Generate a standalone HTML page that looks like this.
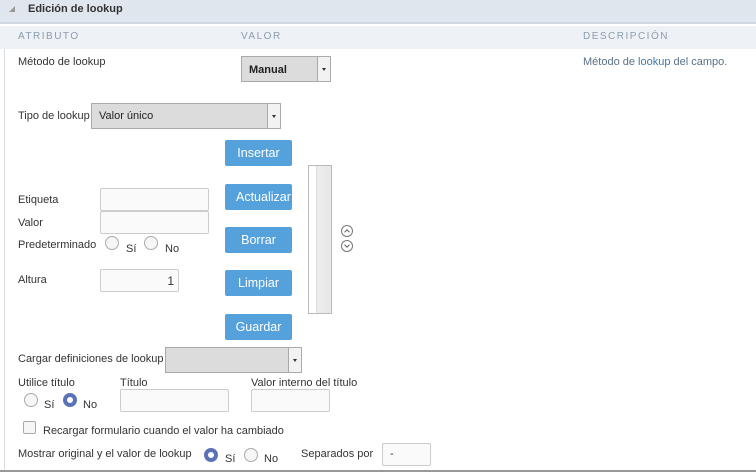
<!DOCTYPE html>
<html><head><meta charset="utf-8"><style>
*{box-sizing:border-box;margin:0;padding:0}
body{width:756px;height:473px;background:#fff;font-family:"Liberation Sans",sans-serif;font-size:11px;color:#333;position:relative;overflow:hidden}
.a{position:absolute;white-space:nowrap}
.hdr{left:0;top:0;width:756px;height:24px;background:#e0e6ee;border-bottom:2px solid #d0d8e2}
.col{left:0;top:26px;width:756px;height:23px;background:#eef2f6}
.inp{position:absolute;border:1px solid #ccc;background:#fafafa;border-radius:2px}
.sel{position:absolute;border:1px solid #aaa;background:#dcdcdc;font-size:11px;color:#222;padding-left:7px}
.sel b{position:absolute;right:0;top:0;bottom:0;width:13px;border-left:1px solid #aaa;background:#f2f2f2}
.sel b:after{content:"";position:absolute;left:4px;top:50%;margin-top:-1px;border:2.5px solid transparent;border-top:3px solid #333}
.btn{position:absolute;left:225px;width:67px;height:26px;background:#55a1dc;color:#fff;font-family:"Liberation Sans",sans-serif;font-size:12.5px;border-radius:2px;text-align:center;line-height:26px;overflow:hidden}
.r{position:absolute;width:14px;height:14px;border:1px solid #aaa;border-radius:50%;background:#f6f6f6}
.r.on{border:4px solid #5a72b8;background:#fff}
</style></head><body>
<div class="a hdr"></div>
<div class="a" style="left:9px;top:6px;width:0;height:0;border-left:6px solid transparent;border-bottom:6px solid #999"></div>
<div class="a" style="left:28px;top:3px;font-size:11px;font-weight:bold;color:#333">Edición de lookup</div>
<div class="a col"></div>
<div class="a" style="left:18px;top:31px;font-size:10px;color:#8a9cad;letter-spacing:1.5px">ATRIBUTO</div>
<div class="a" style="left:241px;top:31px;font-size:10px;color:#8a9cad;letter-spacing:1.5px">VALOR</div>
<div class="a" style="left:583px;top:31px;font-size:10px;color:#8a9cad;letter-spacing:1.5px">DESCRIPCIÓN</div>
<div class="a" style="left:4px;top:49px;width:1px;height:422px;background:#d6dde5"></div>
<div class="a" style="left:0;top:470px;width:756px;height:2px;background:#999"></div>

<div class="a" style="left:18px;top:56px">Método de lookup</div>
<div class="sel" style="left:241px;top:56px;width:90px;height:26px;line-height:26px;font-weight:bold;font-size:11px">Manual<b></b></div>
<div class="a" style="left:583px;top:56px;color:#5a7088">Método de <span style="color:#3a78b0">lookup</span> del campo.</div>

<div class="a" style="left:18px;top:110px">Tipo de lookup</div>
<div class="sel" style="left:91px;top:103px;width:190px;height:26px;line-height:25px">Valor único<b></b></div>

<div class="a" style="left:18px;top:194px">Etiqueta</div>
<div class="inp" style="left:100px;top:188px;width:109px;height:23px"></div>
<div class="a" style="left:18px;top:217px">Valor</div>
<div class="inp" style="left:100px;top:211px;width:109px;height:23px"></div>
<div class="a" style="left:18px;top:239px">Predeterminado</div>
<div class="r" style="left:105px;top:236px"></div><div class="a" style="left:126px;top:243px">Sí</div>
<div class="r" style="left:144px;top:236px"></div><div class="a" style="left:165px;top:243px">No</div>
<div class="a" style="left:18px;top:274px">Altura</div>
<div class="inp" style="left:100px;top:269px;width:79px;height:23px;text-align:right;padding-right:4px;line-height:22px;font-size:12px">1</div>

<div class="btn" style="top:140px">Insertar</div>
<div class="btn" style="top:184px;text-align:left;padding-left:11px">Actualizar</div>
<div class="btn" style="top:227px">Borrar</div>
<div class="btn" style="top:270px">Limpiar</div>
<div class="btn" style="top:314px">Guardar</div>
<div class="a" style="left:308px;top:165px;width:24px;height:149px;border:1px solid #bbb;background:linear-gradient(90deg,#fff 0 7px,#ddd 7px,#eee 9px,#e6e6e6)"></div>
<svg class="a" style="left:339px;top:224px" width="16" height="30" viewBox="0 0 16 30"><circle cx="8" cy="7" r="5.5" fill="none" stroke="#777"/><path d="M5.5 8.3L8 5.8L10.5 8.3" fill="none" stroke="#555"/><circle cx="8" cy="22" r="5.5" fill="none" stroke="#777"/><path d="M5.5 20.7L8 23.2L10.5 20.7" fill="none" stroke="#555"/></svg>

<div class="a" style="left:18px;top:353px">Cargar definiciones de lookup</div>
<div class="sel" style="left:165px;top:347px;width:137px;height:26px"><b></b></div>
<div class="a" style="left:18px;top:377px">Utilice título</div>
<div class="r" style="left:24px;top:393px"></div><div class="a" style="left:44px;top:399px">Sí</div>
<div class="r on" style="left:63px;top:393px"></div><div class="a" style="left:83px;top:399px">No</div>
<div class="a" style="left:120px;top:377px">Título</div>
<div class="inp" style="left:120px;top:389px;width:109px;height:23px"></div>
<div class="a" style="left:251px;top:377px">Valor interno del título</div>
<div class="inp" style="left:251px;top:389px;width:79px;height:23px"></div>
<div class="a" style="left:23px;top:421px;width:13px;height:13px;border:1px solid #aaa;border-radius:2px;background:#f6f6f6"></div>
<div class="a" style="left:43px;top:425px">Recargar formulario cuando el valor ha cambiado</div>
<div class="a" style="left:18px;top:448px">Mostrar original y el valor de lookup</div>
<div class="r on" style="left:204px;top:448px"></div><div class="a" style="left:225px;top:453px">Sí</div>
<div class="r" style="left:244px;top:448px"></div><div class="a" style="left:264px;top:453px">No</div>
<div class="a" style="left:301px;top:448px">Separados por</div>
<div class="inp" style="left:382px;top:443px;width:49px;height:23px;padding-left:7px;line-height:21px">-</div>
</body></html>
